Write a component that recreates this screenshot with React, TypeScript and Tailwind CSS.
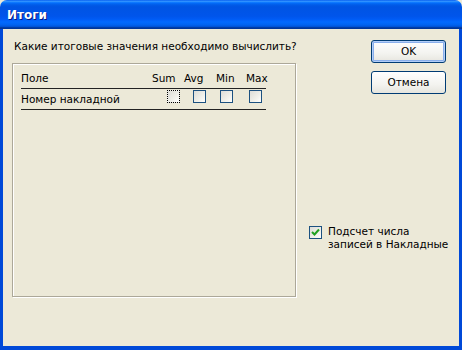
import React from 'react';

const font = { fontFamily: '"DejaVu Sans", Verdana, sans-serif' };

const XpCheck = ({ checked, focused }: { checked?: boolean; focused?: boolean }) => (
  <span
    className={`relative inline-flex h-[13px] w-[13px] items-center justify-center border bg-[linear-gradient(135deg,#DCDCD7_0%,#F0F0EA_60%,#FFFFFF_100%)] ${
      focused ? 'border-dotted border-black' : 'border-[#1C5180]'
    }`}
  >
    {checked && (
      <svg width="9" height="9" viewBox="0 0 9 9">
        <path d="M1 4 L3.5 6.5 L8 1.5" stroke="#21A121" strokeWidth="2" fill="none" />
      </svg>
    )}
  </span>
);

const XpButton = ({ label, isDefault }: { label: string; isDefault?: boolean }) => (
  <button
    className={`flex h-[23px] w-[75px] items-center justify-center rounded-[3px] border border-[#003C74] bg-[linear-gradient(#FFFFFF_0%,#F3F3EF_60%,#E6E5DE_100%)] text-[10.5px] text-black ${
      isDefault ? 'shadow-[inset_0_0_0_1px_#B3CEF8,inset_0_0_0_2px_#8AAFEB]' : ''
    }`}
  >
    {label}
  </button>
);

export default function App() {
  const cols = ['Sum', 'Avg', 'Min', 'Max'];
  return (
    <div className="h-[350px] w-[462px] bg-[#ECE9D8]" style={font}>
      <div className="flex h-full w-full flex-col overflow-hidden rounded-t-[7px]">
        {/* Title bar */}
        <div className="flex h-[29px] shrink-0 items-center bg-[linear-gradient(to_bottom,#0058EE_0%,#3593FF_4%,#288EFF_6%,#127DFF_8%,#036FFC_10%,#0262EE_14%,#0057E5_20%,#0054E3_24%,#0055EB_56%,#005BF5_66%,#026AFE_76%,#0062EF_86%,#0052D6_92%,#0040AB_94%,#003092_100%)] pl-[7px]">
          <span className="text-[12px] font-bold text-white [text-shadow:1px_1px_0_#0A1883]">Итоги</span>
        </div>

        {/* Client area */}
        <div className="flex flex-1 border-x-[3px] border-b-[4px] border-[#0049D8] bg-[#ECE9D8] text-[10.5px] text-black">
          <div className="flex w-[293px] shrink-0 flex-col pl-[9px] pt-[11px]">
            <div className="ml-[2px] h-[13px] whitespace-nowrap leading-[13px]">Какие итоговые значения необходимо вычислить?</div>
            <div className="mt-[10px] h-[234px] w-[284px] border border-[#ACA899] shadow-[1px_1px_0_#FFFFFF,inset_1px_1px_0_#FFFFFF] pl-[8px] pt-[8px]">
              <div className="w-[245px]">
                <div className="flex h-[17px] items-start border-b border-[#222] leading-[13px]">
                  <span className="w-[131px]">Поле</span>
                  {cols.map((c, i) => (
                    <span key={c} className={i === 0 ? 'w-[32px]' : i === 1 ? 'w-[32px]' : i === 2 ? 'w-[30px]' : 'w-[20px]'}>
                      {c}
                    </span>
                  ))}
                </div>
                <div className="flex h-[21px] items-center border-b border-[#222]">
                  <span className="w-[146px] leading-[13px]">Номер накладной</span>
                  <span className="w-[26px]"><XpCheck focused /></span>
                  <span className="w-[27px]"><XpCheck /></span>
                  <span className="w-[29px]"><XpCheck /></span>
                  <span><XpCheck /></span>
                </div>
              </div>
            </div>
          </div>

          <div className="flex min-w-0 flex-1 flex-col pl-[13px] pr-[13px] pt-[11px]">
            <div className="flex flex-col items-end gap-[8px]">
              <XpButton label="OK" isDefault />
              <XpButton label="Отмена" />
            </div>
            <div className="mt-[131px] flex items-start gap-[6px]">
              <span className="mt-[1px] shrink-0"><XpCheck checked /></span>
              <span className="whitespace-nowrap leading-[13px]">
                Подсчет числа
                <br />
                записей в Накладные
              </span>
            </div>
          </div>
        </div>
      </div>
    </div>
  );
}
